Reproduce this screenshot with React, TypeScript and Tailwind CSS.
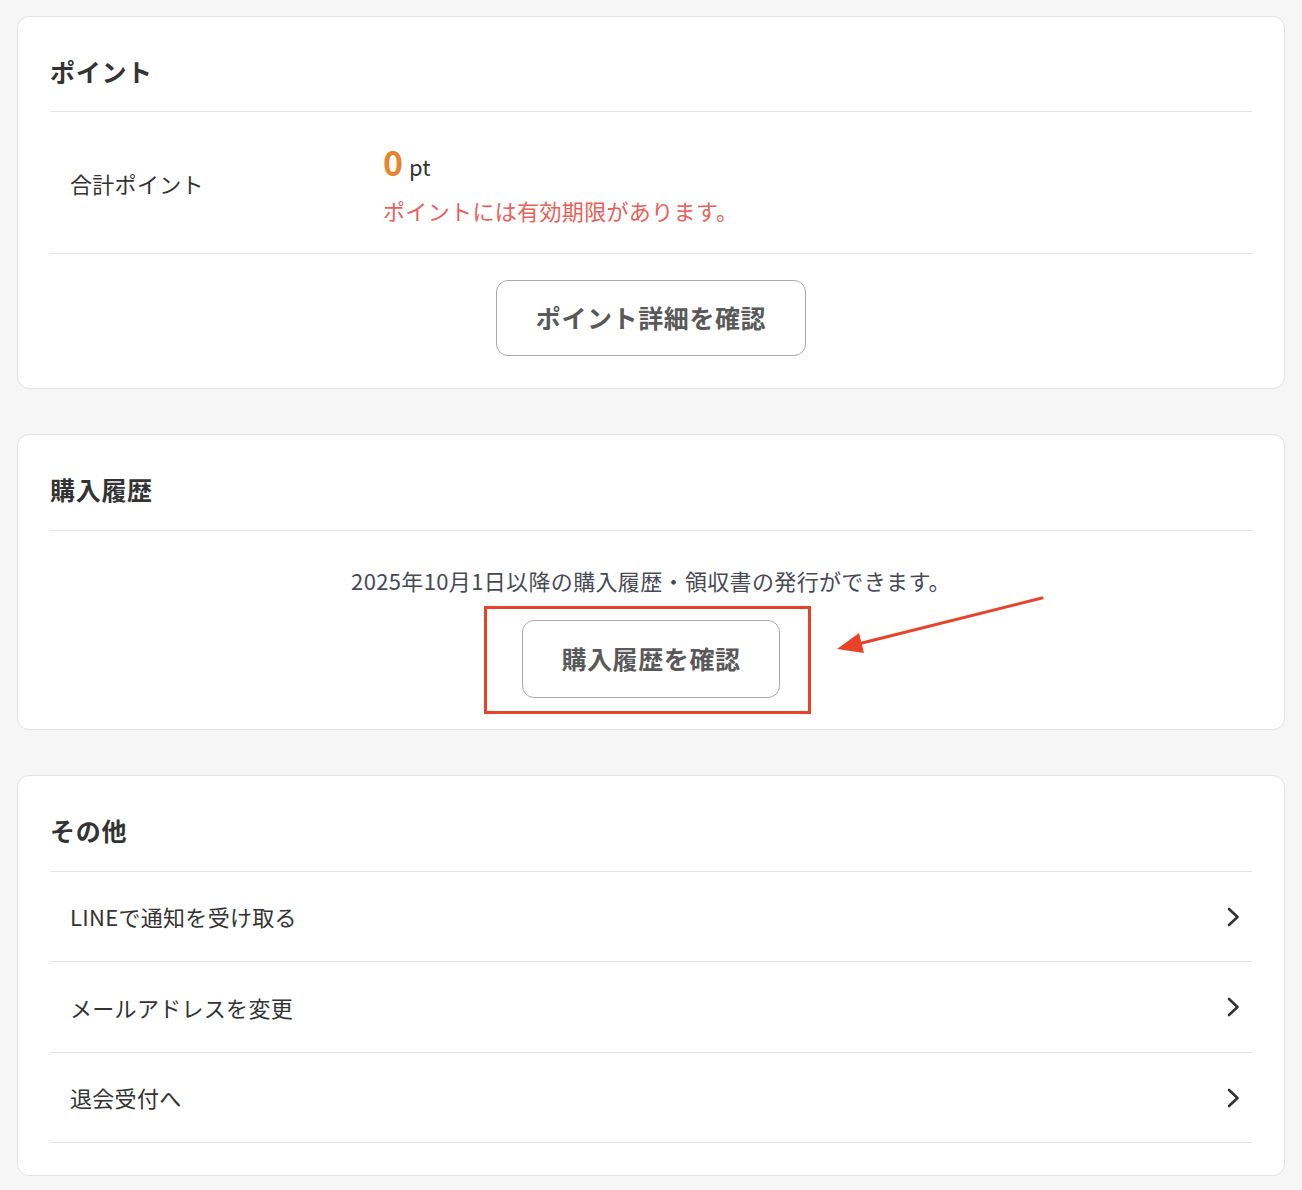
import { ReactNode } from "react"

const font = { fontFamily: '"Noto Sans CJK JP", "Noto Sans", sans-serif' }

function Card({ title, tall, children }: { title: string; tall?: boolean; children: ReactNode }) {
  return (
    <section className="bg-white border border-[#e3e3e3] rounded-[12px] px-[32px]">
      <h2
        className={
          (tall ? "pt-[35px] pb-[22px] " : "pt-[35px] pb-[21px] ") +
          "text-[25px] leading-[38px] font-bold tracking-[0.7px] text-[#333] border-b border-[#e5e5e5]"
        }
      >
        {title}
      </h2>
      {children}
    </section>
  )
}

function Chevron() {
  return (
    <svg width="14" height="20" viewBox="0 0 14 20" fill="none">
      <path d="M3 2l8.5 8-8.5 8" stroke="#333" strokeWidth="2.6" strokeLinecap="round" strokeLinejoin="round" />
    </svg>
  )
}

export default function App() {
  // 行の高さは参照画像に合わせて微調整（border込み）
  const links = [
    { label: "LINEで通知を受け取る", h: "h-[90px]" },
    { label: "メールアドレスを変更", h: "h-[91px]" },
    { label: "退会受付へ", h: "h-[90px]" },
  ]

  return (
    <div className="relative min-h-[1190px] bg-[#f6f6f6] px-[17px] pt-[16px] pb-[14px]" style={font}>
      <div className="flex flex-col gap-[45px]">
        {/* ポイント */}
        <Card title="ポイント">
          <div className="flex items-center border-b border-[#e5e5e5] pt-[28px] pb-[27px]">
            <div className="w-[333px] pl-[20px] text-[22px] tracking-[0.3px] text-[#333]">合計ポイント</div>
            <div>
              <div className="flex items-baseline h-[44px] leading-[44px]">
                <span className="text-[34px] font-bold text-[#e5852e]">0</span>
                <span className="ml-[6px] text-[22px] text-[#333]">pt</span>
              </div>
              <p className="mt-[10px] text-[22px] leading-[32px] tracking-[0.35px] text-[#e8605a]">
                ポイントには有効期限があります。
              </p>
            </div>
          </div>
          <div className="flex justify-center pt-[26px] pb-[32px]">
            <button className="w-[310px] h-[76px] rounded-[12px] border border-[#aaa] bg-white text-[25px] font-bold tracking-[0.6px] text-[#595959]">
              ポイント詳細を確認
            </button>
          </div>
        </Card>

        {/* 購入履歴 */}
        <Card title="購入履歴" tall>
          <div className="flex flex-col items-center pt-[33px] pb-[31px]">
            <p className="text-[22px] leading-[32px] tracking-[0.35px] text-[#474a55]">
              2025年10月1日以降の購入履歴・領収書の発行ができます。
            </p>
            <div className="relative mt-[24px]">
              <button className="w-[258px] h-[78px] rounded-[12px] border border-[#aaa] bg-white text-[25px] font-bold tracking-[0.6px] text-[#595959]">
                購入履歴を確認
              </button>
              <div className="absolute left-[-38px] top-[-14px] w-[327px] h-[108px] border-[3px] border-[#e8432a] pointer-events-none" />
            </div>
          </div>
        </Card>

        {/* その他 */}
        <Card title="その他" tall>
          <ul className="pb-[32px]">
            {links.map((link) => (
              <li
                key={link.label}
                className={
                  link.h +
                  " flex items-center justify-between pl-[20px] pr-[12px] border-b border-[#e5e5e5] text-[22px] tracking-[0.3px] text-[#333]"
                }
              >
                <span>{link.label}</span>
                <Chevron />
              </li>
            ))}
          </ul>
        </Card>
      </div>

      {/* annotation arrow */}
      <svg className="absolute left-[830px] top-[590px] pointer-events-none" width="220" height="70" viewBox="830 590 220 70">
        <line x1="1042" y1="598" x2="858" y2="644" stroke="#e8432a" strokeWidth="3" strokeLinecap="round" />
        <polygon points="837,649 864,653 859,633" fill="#e8432a" />
      </svg>
    </div>
  )
}
